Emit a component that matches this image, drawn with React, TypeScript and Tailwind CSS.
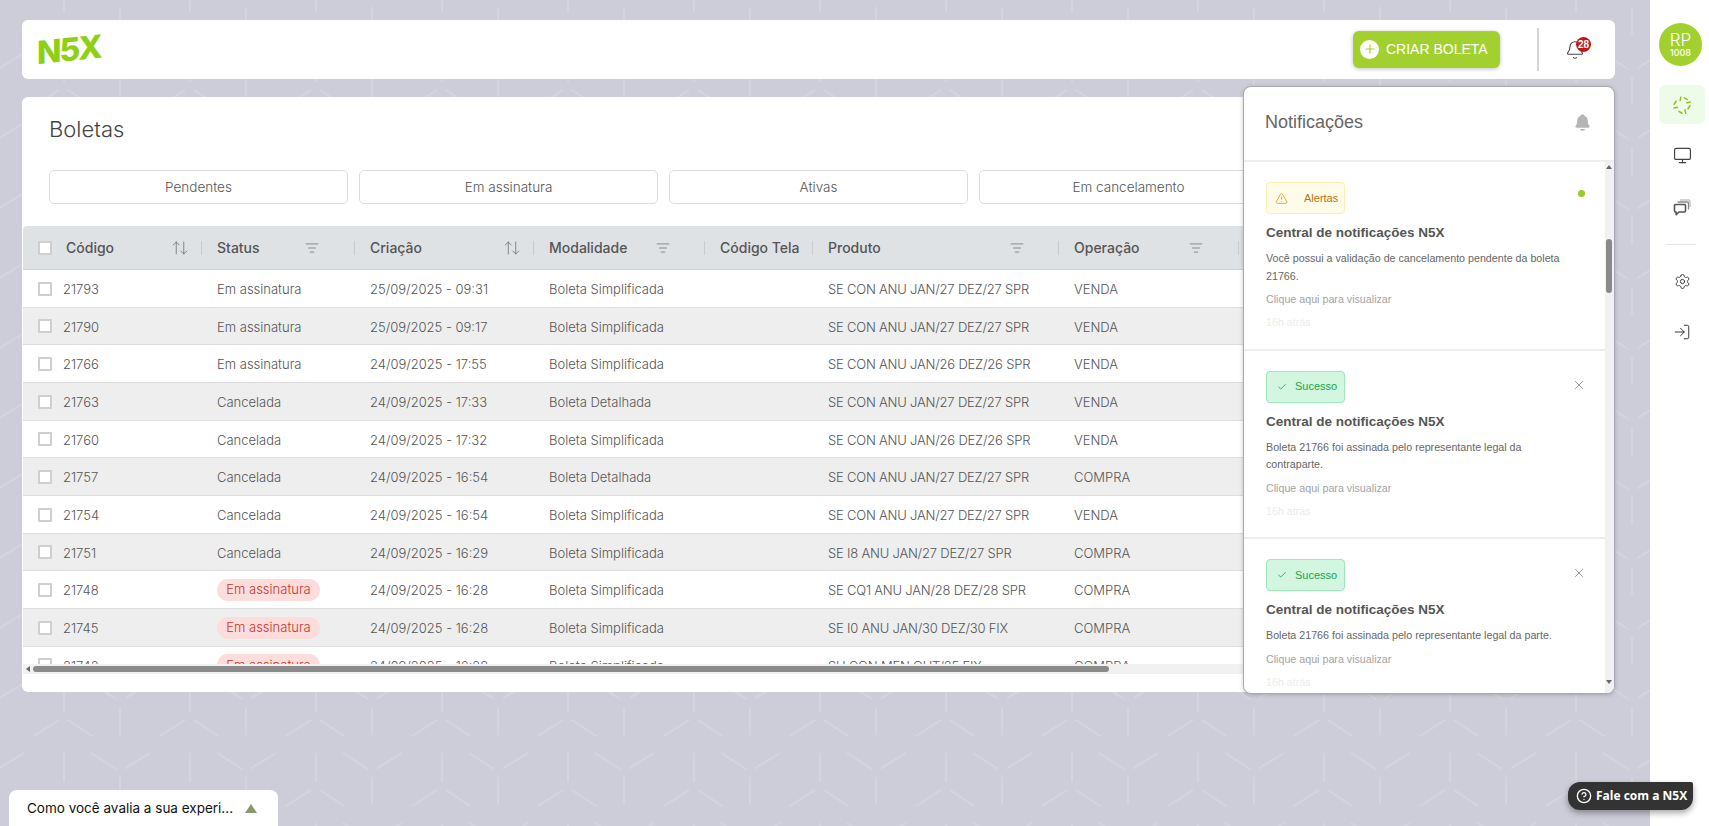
import { ArrowUpDown, Bell, Check, CircleHelp, ListFilter, LogIn, Monitor, Plus, Settings, TriangleAlert, X } from 'lucide-react';
import { IoNotifications } from 'react-icons/io5';

const rows = [
    { id: '21793', status: 'Em assinatura', date: '25/09/2025 - 09:31', mod: 'Boleta Simplificada', prod: 'SE CON ANU JAN/27 DEZ/27 SPR', op: 'VENDA' },
    { id: '21790', status: 'Em assinatura', date: '25/09/2025 - 09:17', mod: 'Boleta Simplificada', prod: 'SE CON ANU JAN/27 DEZ/27 SPR', op: 'VENDA' },
    { id: '21766', status: 'Em assinatura', date: '24/09/2025 - 17:55', mod: 'Boleta Simplificada', prod: 'SE CON ANU JAN/26 DEZ/26 SPR', op: 'VENDA' },
    { id: '21763', status: 'Cancelada', date: '24/09/2025 - 17:33', mod: 'Boleta Detalhada', prod: 'SE CON ANU JAN/27 DEZ/27 SPR', op: 'VENDA' },
    { id: '21760', status: 'Cancelada', date: '24/09/2025 - 17:32', mod: 'Boleta Simplificada', prod: 'SE CON ANU JAN/26 DEZ/26 SPR', op: 'VENDA' },
    { id: '21757', status: 'Cancelada', date: '24/09/2025 - 16:54', mod: 'Boleta Detalhada', prod: 'SE CON ANU JAN/27 DEZ/27 SPR', op: 'COMPRA' },
    { id: '21754', status: 'Cancelada', date: '24/09/2025 - 16:54', mod: 'Boleta Simplificada', prod: 'SE CON ANU JAN/27 DEZ/27 SPR', op: 'VENDA' },
    { id: '21751', status: 'Cancelada', date: '24/09/2025 - 16:29', mod: 'Boleta Simplificada', prod: 'SE I8 ANU JAN/27 DEZ/27 SPR', op: 'COMPRA' },
    { id: '21748', status: 'Pill', date: '24/09/2025 - 16:28', mod: 'Boleta Simplificada', prod: 'SE CQ1 ANU JAN/28 DEZ/28 SPR', op: 'COMPRA' },
    { id: '21745', status: 'Pill', date: '24/09/2025 - 16:28', mod: 'Boleta Simplificada', prod: 'SE I0 ANU JAN/30 DEZ/30 FIX', op: 'COMPRA' },
    { id: '21742', status: 'Pill', date: '24/09/2025 - 16:28', mod: 'Boleta Simplificada', prod: 'SU CON MEN OUT/25 FIX', op: 'COMPRA' },
];

const tabs = ['Pendentes', 'Em assinatura', 'Ativas', 'Em cancelamento', 'Encerradas'];

const BackgroundPattern = () => (
    <svg className="absolute inset-0 h-full w-full" aria-hidden="true">
        <defs>
            <pattern id="hex" x="0" y="0" width="126" height="70" patternUnits="userSpaceOnUse">
                <g stroke="#d4d4de" strokeWidth="2" fill="none">
                    <path d="M64 53V82M64 -17V12M120 7V35" />
                    <path d="M34 36L59 20M68 20L92 36" />
                    <path d="M91 53L116 69M-2 69L24 53M125 69L150 53" />
                </g>
            </pattern>
        </defs>
        <rect width="100%" height="100%" fill="url(#hex)" />
    </svg>
);

const Spinner = () => (
    <svg width="18" height="18" viewBox="0 0 24 24" fill="none" stroke="#8fc31f" strokeWidth="2" strokeLinecap="round">
        <path d="M10.5 1.5L9.5 6M15 2.5L19 4.5M23 8L18.5 9M22.5 13L20 17M17 23L16 18.5M12 23L8 20.5M1.5 16L6 15M1.5 11L4 7" />
    </svg>
);

const ChatsIcon = () => (
    <svg width="18" height="18" viewBox="0 0 18 18" fill="none" stroke="#555" strokeWidth="1.3" strokeLinejoin="round">
        <path d="M1.5 6.5a1 1 0 0 1 1-1h9a1 1 0 0 1 1 1v5.5a1 1 0 0 1-1 1H6L3.2 15.6V13h-.7a1 1 0 0 1-1-1z" strokeWidth="1.6" />
        <path d="M4.5 3h10a1 1 0 0 1 1 1v6.5" stroke="#888" />
        <path d="M7 1h9a1 1 0 0 1 1 1v6" stroke="#aaa" strokeWidth="1" />
    </svg>
);

const HeaderCell = ({ label, width, sort, filter, iconClass }: { label: string; width: string; sort?: boolean; filter?: boolean; iconClass?: string }) => (
    <div className={`flex shrink-0 items-center h-full relative pl-[15px] ${width}`}>
        <span className="text-[14px] font-medium text-[#555] whitespace-nowrap">{label}</span>
        {sort && <ArrowUpDown size={18} strokeWidth={1} className={`text-[#666] ${iconClass}`} />}
        {filter && <ListFilter size={14} strokeWidth={1.2} className={`text-[#666] ${iconClass}`} />}
        <span className="ml-auto h-[14px] w-px bg-[#c9cdd1]" />
    </div>
);

const NotificationItem = ({ kind, text, link = 'Clique aqui para visualizar' }: { kind: 'alert' | 'ok'; text: string; link?: string }) => (
    <div className="h-[188.5px] shrink-0 border-b-2 border-[#eeeeee] pl-[22px] pr-[20px] pt-[20px] relative">
        {kind === 'alert' ? (
            <div className="flex h-[32px] w-[79px] items-center gap-[16px] rounded-[4px] border border-[#fdeeb0] bg-[#fffbe9] pl-[8px] text-[11px] text-[#b8720f]">
                <TriangleAlert size={13} strokeWidth={1.5} className="text-[#e09b1a]" />
                <span>Alertas</span>
            </div>
        ) : (
            <div className="flex h-[32px] w-[79px] items-center gap-[8px] rounded-[4px] border border-[#9ce8b8] bg-[#d2f6df] pl-[10px] text-[11px] text-[#12a84c]">
                <Check size={10} strokeWidth={2} />
                <span>Sucesso</span>
            </div>
        )}
        {kind === 'alert' ? (
            <span className="absolute right-[20px] top-[28px] h-[7px] w-[7px] rounded-full bg-[#97cb26]" />
        ) : (
            <X size={14} strokeWidth={1.2} className="absolute right-[19px] top-[27px] text-[#5d6b7a]" />
        )}
        <p className="mt-[9px] text-[13.5px] font-bold leading-[20px] text-[#555]">Central de notificações N5X</p>
        <p className="mt-[7px] w-[302px] text-[10.7px] leading-[17.5px] text-[#666]">{text}</p>
        <p className="mt-[5px] text-[10.7px] leading-[18px] text-[#a3a3a3]">{link}</p>
        <p className="mt-[5px] text-[10.7px] leading-[18px] text-[#ececec]">16h atrás</p>
    </div>
);

export default function App() {
    return (
        <div className="flex h-[826px] w-[1709px] overflow-hidden font-['Inter',sans-serif] bg-white">
            <div className="relative w-[1650px] shrink-0 bg-[#cdcdd9] pl-[22px] pr-[35px] pt-[20px]">
                <BackgroundPattern />

                <div className="relative flex h-[59px] items-center rounded-[6px] bg-white pl-[15px]">
                    <div className="flex items-center font-['Inter',sans-serif] text-[32px] font-extrabold leading-none tracking-[-2px] text-[#8fd014] -skew-y-6">
                        <span>N</span>
                        <span>5</span>
                        <span>X</span>
                    </div>
                    <button className="mb-px ml-auto flex h-[37px] w-[147px] items-center rounded-[6px] bg-[#a2d12f] pl-[7px] font-['Liberation_Sans',sans-serif] text-[14px] text-white shadow-[0_1px_4px_rgba(0,0,0,0.25)]">
                        <span className="flex h-[19px] w-[19px] items-center justify-center rounded-full bg-white">
                            <Plus size={14} strokeWidth={2} className="text-[#a2d12f]" />
                        </span>
                        <span className="ml-[7px]">CRIAR BOLETA</span>
                    </button>
                    <span className="ml-[37px] h-[43px] w-[2px] bg-[#d5d5d5]" />
                    <div className="relative ml-[26px] mr-[30px] h-[20px] w-[20px]">
                        <Bell size={20} strokeWidth={1.3} className="text-[#444]" />
                        <span className="absolute left-[11px] top-[-3px] flex h-[15px] w-[15px] items-center justify-center rounded-full bg-[#c01818] font-['Liberation_Sans',sans-serif] text-[10px] font-bold text-white">28</span>
                    </div>
                </div>

                <div className="relative mt-[18px] h-[595px] overflow-hidden rounded-[6px] bg-white">
                    <h1 className="pl-[27px] pt-[19px] text-[22px] font-light leading-[26px] text-[#444]">Boletas</h1>
                    <div className="mt-[28px] flex gap-[11px] pl-[27px]">
                        {tabs.map((tab) => (
                            <div key={tab} className="flex h-[34px] w-[299px] shrink-0 items-center justify-center rounded-[5px] border border-[#dcdcdc] text-[13.5px] font-light text-[#555]">
                                {tab}
                            </div>
                        ))}
                    </div>
                    <div className="mt-[22px] h-[438px] overflow-hidden pl-px">
                        <div className="flex h-[44px] items-center rounded-t-[4px] border-b border-[#cfd3d7] bg-[#dfe2e5]">
                            <div className="flex h-full w-[179px] shrink-0 items-center pl-[15px]">
                                <span className="h-[14px] w-[14px] rounded-[1px] border-2 border-[#cfcfcf] bg-white" />
                                <span className="ml-[14px] text-[14px] font-medium text-[#555]">Código</span>
                                <ArrowUpDown size={18} strokeWidth={1} className="ml-[57px] text-[#666]" />
                                <span className="ml-auto h-[14px] w-px bg-[#c9cdd1]" />
                            </div>
                            <HeaderCell label="Status" width="w-[153px]" filter iconClass="ml-[45px]" />
                            <HeaderCell label="Criação" width="w-[179px]" sort iconClass="ml-[81px]" />
                            <HeaderCell label="Modalidade" width="w-[171px]" filter iconClass="ml-[29px]" />
                            <HeaderCell label="Código Tela" width="w-[108px]" />
                            <HeaderCell label="Produto" width="w-[246px]" filter iconClass="ml-[129px]" />
                            <HeaderCell label="Operação" width="w-[180px]" filter iconClass="ml-[49px]" />
                        </div>
                        {rows.map((row, i) => (
                            <div key={row.id} className={`flex h-[37.67px] items-center border-b border-[#dddddd] pt-[3px] text-[13px] font-light text-[#555] ${i % 2 === 1 ? 'bg-[#eeeeee]' : 'bg-white'}`}>
                                <div className="flex w-[179px] shrink-0 items-center pl-[15px]">
                                    <span className="mb-[2px] h-[14px] w-[14px] rounded-[1px] border-2 border-[#cfcfcf] bg-white" />
                                    <span className="ml-[11px]">{row.id}</span>
                                </div>
                                <div className="w-[153px] shrink-0 pl-[15px]">
                                    {row.status === 'Pill' ? (
                                        <span className="mb-[2px] flex h-[22px] w-[103px] items-center justify-center rounded-full bg-[#fddcdc] text-[#c0392b]">Em assinatura</span>
                                    ) : (
                                        row.status
                                    )}
                                </div>
                                <div className="w-[179px] shrink-0 pl-[15px]">{row.date}</div>
                                <div className="w-[171px] shrink-0 pl-[15px]">{row.mod}</div>
                                <div className="w-[108px] shrink-0" />
                                <div className="w-[246px] shrink-0 pl-[15px] tracking-[-0.2px]">{row.prod}</div>
                                <div className="w-[180px] shrink-0 pl-[15px]">{row.op}</div>
                            </div>
                        ))}
                    </div>
                    <div className="ml-px flex h-[10px] items-center bg-[#f1f1f1] pl-[3px]">
                        <span className="h-0 w-0 border-y-[3px] border-r-[4px] border-y-transparent border-r-[#666]" />
                        <span className="ml-[3px] h-[6px] w-[1076px] rounded-full bg-[#8a8a8a]" />
                    </div>
                </div>

                <div className="absolute left-[1243px] top-[86px] flex h-[608px] w-[372px] flex-col overflow-hidden rounded-[8px] border border-[#a9a9b5] bg-white shadow-[0_1px_4px_rgba(0,0,0,0.2)] font-['Liberation_Sans',sans-serif]">
                    <div className="flex h-[75px] shrink-0 items-center justify-between border-b-2 border-[#eeeeee] pb-[2px] pl-[21px] pr-[22px]">
                        <span className="text-[18px] text-[#666]">Notificações</span>
                        <IoNotifications size={19} className="text-[#b5b5b5]" />
                    </div>
                    <div className="flex min-h-0 flex-1">
                        <div className="flex min-w-0 flex-1 flex-col overflow-hidden">
                            <NotificationItem kind="alert" text="Você possui a validação de cancelamento pendente da boleta 21766." />
                            <NotificationItem kind="ok" text="Boleta 21766 foi assinada pelo representante legal da contraparte." />
                            <NotificationItem kind="ok" text="Boleta 21766 foi assinada pelo representante legal da parte." />
                        </div>
                        <div className="relative w-[9px] shrink-0 bg-[#f1f1f1]">
                            <span className="absolute left-[1px] top-[3px] h-0 w-0 border-x-[3.5px] border-b-[4px] border-x-transparent border-b-[#666]" />
                            <span className="absolute left-[1px] top-[77px] h-[54px] w-[6px] rounded-full bg-[#8a8a8a]" />
                            <span className="absolute bottom-[9px] left-[1px] h-0 w-0 border-x-[3.5px] border-t-[4px] border-x-transparent border-t-[#666]" />
                        </div>
                    </div>
                </div>

                <div className="absolute bottom-0 left-[9px] flex h-[36px] w-[269px] items-center rounded-t-[8px] bg-white pl-[18px] text-[13.5px] text-[#111]">
                    <span>Como você avalia a sua experi...</span>
                    <span className="ml-[12px] h-0 w-0 border-x-[6px] border-b-[9px] border-x-transparent border-b-[#8a9a6a]" />
                </div>
            </div>

            <div className="relative flex w-[59px] shrink-0 flex-col items-center pt-[23px]">
                <div className="ml-[2px] flex h-[43px] w-[43px] flex-col items-center justify-center rounded-full bg-[#a2d12f] text-white">
                    <span className="text-[17px] font-light leading-[16px]">RP</span>
                    <span className="text-[9px] font-medium leading-[10px]">1008</span>
                </div>
                <div className="ml-[5px] mt-[19px] flex h-[39px] w-[46px] items-center justify-center rounded-[6px] bg-[#eefbe8]">
                    <Spinner />
                </div>
                <Monitor size={19} strokeWidth={1.5} className="ml-[5px] mt-[22px] text-[#444]" />
                <div className="ml-[5px] mt-[34px]"><ChatsIcon /></div>
                <span className="ml-[3px] mt-[27px] h-px w-[30px] bg-[#dfe3e8]" />
                <Settings size={17} strokeWidth={1.3} className="ml-[5px] mt-[28px] text-[#333]" />
                <LogIn size={18} strokeWidth={1.3} className="ml-[5px] mt-[33px] text-[#333]" />
            </div>

            <div className="absolute left-[1568px] top-[782px] flex h-[28px] w-[125px] items-center gap-[4px] rounded-[12px] rounded-tr-[2px] bg-[#333333] pl-[8px] text-[12px] font-bold text-white shadow-[0_3px_6px_rgba(0,0,0,0.35)] font-['Open_Sans',sans-serif]">
                <CircleHelp size={16} strokeWidth={2} className="text-white" />
                <span>Fale com a N5X</span>
            </div>
        </div>
    );
}
